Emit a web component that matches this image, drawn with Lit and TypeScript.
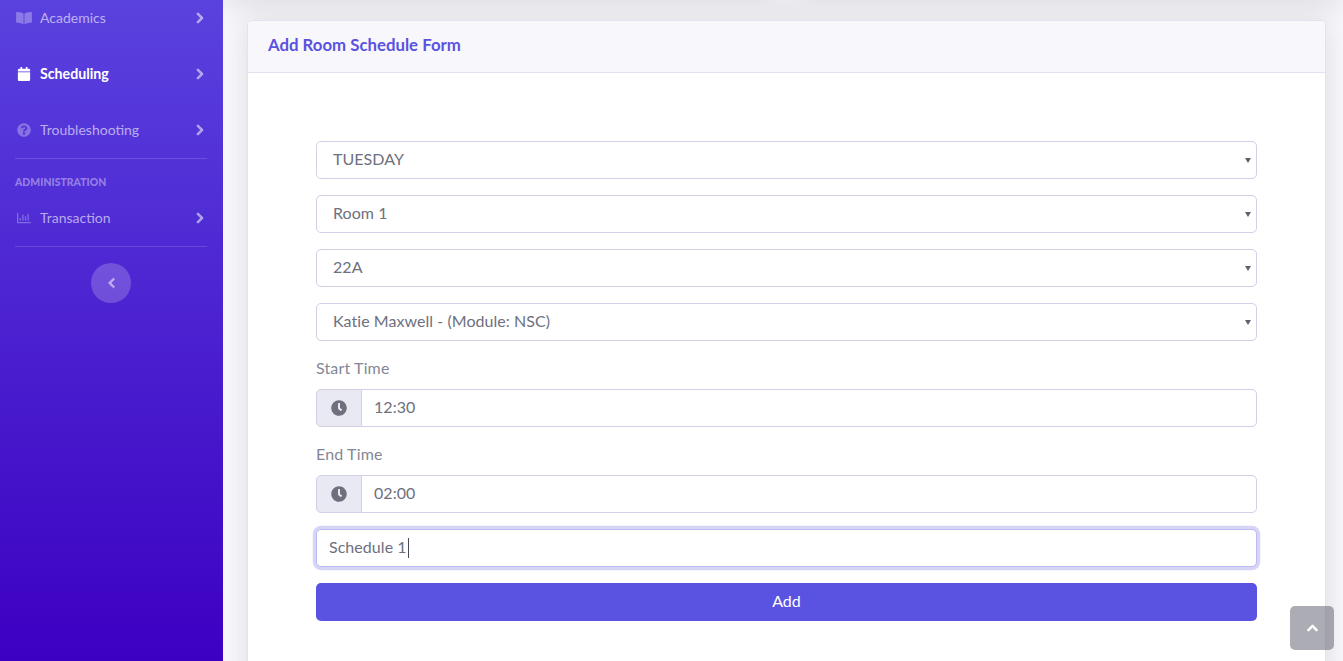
import { LitElement, html, css, svg } from "lit";
import { customElement } from "lit/decorators.js";

const P = {
  right: ["0 0 320 512", "M285.476 272.971L91.132 467.314c-9.373 9.373-24.569 9.373-33.941 0l-22.667-22.667c-9.357-9.357-9.375-24.522-.04-33.901L188.505 256 34.484 101.255c-9.335-9.379-9.317-24.544.04-33.901l22.667-22.667c9.373-9.373 24.569-9.373 33.941 0L285.475 239.03c9.373 9.372 9.373 24.568.001 33.941z"],
  left: ["0 0 320 512", "M34.52 239.03L228.87 44.69c9.37-9.37 24.57-9.37 33.94 0l22.67 22.67c9.36 9.36 9.37 24.52.04 33.9L131.49 256l154.02 154.75c9.34 9.38 9.32 24.54-.04 33.9l-22.67 22.67c-9.37 9.37-24.57 9.37-33.94 0L34.52 272.97c-9.37-9.37-9.37-24.57 0-33.94z"],
  up: ["0 0 448 512", "M240.971 130.524l194.343 194.343c9.373 9.373 9.373 24.569 0 33.941l-22.667 22.667c-9.357 9.357-24.522 9.375-33.901.04L224 227.495 69.255 381.516c-9.379 9.335-24.544 9.317-33.901-.04l-22.667-22.667c-9.373-9.373-9.373-24.569 0-33.941L207.03 130.525c9.372-9.373 24.568-9.373 33.941-.001z"],
  clock: ["0 0 512 512", "M256,8C119,8,8,119,8,256S119,504,256,504,504,393,504,256,393,8,256,8Zm92.49,313h0l-20,25a16,16,0,0,1-22.49,2.5h0l-67-49.72a40,40,0,0,1-15-31.23V112a16,16,0,0,1,16-16h32a16,16,0,0,1,16,16V256l58,42.5A16,16,0,0,1,348.49,321Z"],
  calendar: ["0 0 448 512", "M12 192h424c6.6 0 12 5.4 12 12v260c0 26.5-21.5 48-48 48H48c-26.5 0-48-21.5-48-48V204c0-6.6 5.4-12 12-12zm436-44v-36c0-26.5-21.5-48-48-48h-48V12c0-6.6-5.4-12-12-12h-40c-6.6 0-12 5.4-12 12v52H160V12c0-6.6-5.4-12-12-12h-40c-6.6 0-12 5.4-12 12v52H48C21.5 64 0 85.5 0 112v36c0 6.6 5.4 12 12 12h424c6.6 0 12-5.4 12-12z"],
  question: ["0 0 512 512", "M504 256c0 136.997-111.043 248-248 248S8 392.997 8 256C8 119.083 119.043 8 256 8s248 111.083 248 248zM262.655 90c-54.497 0-89.255 22.957-116.549 63.758-3.536 5.286-2.353 12.415 2.715 16.258l34.699 26.31c5.205 3.947 12.621 3.008 16.665-2.122 17.864-22.658 30.113-35.797 57.303-35.797 20.429 0 45.698 13.148 45.698 32.958 0 14.976-12.363 22.667-32.534 33.976C247.128 238.528 216 254.941 216 296v4c0 6.627 5.373 12 12 12h56c6.627 0 12-5.373 12-12v-1.333c0-28.462 83.186-29.647 83.186-106.667 0-58.002-60.165-102-116.531-102zM256 338c-25.365 0-46 20.635-46 46 0 25.364 20.635 46 46 46s46-20.636 46-46c0-25.365-20.635-46-46-46z"],
  book: ["0 0 576 512", "M542.22 32.05c-54.8 3.11-163.72 14.43-230.96 55.59-4.64 2.84-7.27 7.89-7.27 13.17v363.87c0 11.55 12.63 18.85 23.28 13.49 69.18-34.82 169.23-44.32 218.7-46.92 16.89-.89 30.02-14.43 30.02-30.66V62.75c.01-17.71-15.35-31.74-33.77-30.7zM264.73 87.64C197.5 46.48 88.58 35.17 33.78 32.05 15.36 31.01 0 45.04 0 62.75V400.6c0 16.24 13.13 29.78 30.02 30.66 49.49 2.6 149.59 12.11 218.77 46.95 10.62 5.35 23.21-1.94 23.21-13.46V100.63c0-5.29-2.62-10.14-7.27-12.99z"],
  chart: ["0 0 512 512", "M396.8 352h22.4c6.4 0 12.8-6.4 12.8-12.8V108.8c0-6.4-6.4-12.8-12.8-12.8h-22.4c-6.4 0-12.8 6.4-12.8 12.8v230.4c0 6.4 6.4 12.8 12.8 12.8zm-192 0h22.4c6.4 0 12.8-6.4 12.8-12.8V140.8c0-6.4-6.4-12.8-12.8-12.8h-22.4c-6.4 0-12.8 6.4-12.8 12.8v198.4c0 6.4 6.4 12.8 12.8 12.8zm96 0h22.4c6.4 0 12.8-6.4 12.8-12.8V204.8c0-6.4-6.4-12.8-12.8-12.8h-22.4c-6.4 0-12.8 6.4-12.8 12.8v134.4c0 6.4 6.4 12.8 12.8 12.8zM496 400H48V80c0-8.84-7.16-16-16-16H16C7.16 64 0 71.16 0 80v336c0 17.67 14.33 32 32 32h464c8.84 0 16-7.16 16-16v-16c0-8.84-7.16-16-16-16zm-387.2-48h22.4c6.4 0 12.8-6.4 12.8-12.8v-70.4c0-6.4-6.4-12.8-12.8-12.8h-22.4c-6.4 0-12.8 6.4-12.8 12.8v70.4c0 6.4 6.4 12.8 12.8 12.8z"],
} as const;

const icon = (n: keyof typeof P, cls = "") =>
  html`<svg class="ic ${cls}" viewBox=${P[n][0]} fill="currentColor" aria-hidden="true">${svg`<path d=${P[n][1]}></path>`}</svg>`;

@customElement("app-root")
export class AppRoot extends LitElement {
  static styles = css`
    :host {
      display: block;
      height: 100vh;
      overflow: hidden;
      position: relative;
      font-family: "Lato", "Open Sans", sans-serif;
      color: #6e707e;
    }
    * { box-sizing: border-box; }
    .ic { display: block; }
    .fat { stroke: currentColor; stroke-width: 36; }
    .layout { display: flex; height: 661px; overflow: hidden; }

    .sidebar {
      width: 223px;
      flex: none;
      overflow: hidden;
      background: linear-gradient(180deg, #5a42de 0%, #3c00c2 100%);
    }
    .nav { margin-top: -10px; display: flex; flex-direction: column; }
    .item {
      height: 56px;
      display: flex;
      align-items: center;
      padding: 0 19px 0 16px;
      color: rgba(255, 255, 255, 0.6);
      font-size: 14px;
    }
    .item .lead { width: 16px; height: 14px; color: rgba(255, 255, 255, 0.3); flex: none; }
    .item .label { margin-left: 8px; flex: 1; padding-bottom: 2px; }
    .item .chev { width: 8px; height: 12px; color: rgba(255, 255, 255, 0.5); flex: none; }
    .item.active { color: #fff; font-weight: 700; font-size: 14.2px; }
    .item.active .lead { color: #fff; }
    .divider { height: 1px; margin: 0 16px 0 15px; background: rgba(255, 255, 255, 0.15); }
    .heading {
      padding: 0 15px;
      margin-top: 17px;
      height: 14px;
      line-height: 12px;
      font-size: 10.4px;
      font-weight: 900;
      letter-spacing: 0.05px;
      color: rgba(255, 255, 255, 0.4);
      text-transform: uppercase;
    }
    .toggle-row { display: flex; justify-content: center; padding: 16px 1px 0 0; }
    .toggle {
      width: 40px;
      height: 40px;
      border-radius: 50%;
      border: 0;
      padding: 0;
      display: flex;
      align-items: center;
      justify-content: center;
      background: rgba(255, 255, 255, 0.2);
      color: rgba(255, 255, 255, 0.5);
    }
    .toggle .ic { width: 7px; height: 12px; }

    .content {
      flex: 1;
      min-width: 0;
      background: #f8f8fc;
      padding: 21px 17px 0 24px;
      position: relative;
      overflow: hidden;
    }
    .content::before {
      content: "";
      position: absolute;
      left: 0;
      right: 0;
      top: -30px;
      height: 30px;
      box-shadow: 0 4px 28px rgba(58, 59, 69, 0.15);
    }
    .content::after {
      content: "";
      position: absolute;
      left: 535px;
      top: -8px;
      width: 60px;
      height: 16px;
      background: radial-gradient(closest-side, rgba(248, 248, 252, 0.35), rgba(248, 248, 252, 0));
    }
    .card {
      position: relative;
      background: #fff;
      border: 1px solid #e3e2f3;
      border-radius: 5px;
      box-shadow: 0 2.4px 28px rgba(58, 59, 69, 0.15);
      height: 800px;
      margin-top: -1px;
    }
    .card-head {
      height: 52px;
      display: flex;
      align-items: center;
      padding: 0 20px 5px;
      background: #f8f8fc;
      border-bottom: 1px solid #e3e2f3;
      border-radius: 4px 4px 0 0;
      font-weight: 700;
      font-size: 16.8px;
      color: #5a52e0;
    }
    .form { padding: 68px 68px 0; display: flex; flex-direction: column; }
    .sel { position: relative; margin-bottom: 16px; }
    .sel svg { position: absolute; right: 6px; top: 17px; width: 6px; height: 5px; fill: #5f6070; }
    .ctl {
      display: block;
      width: 100%;
      height: 38px;
      border: 1px solid #d1d0e6;
      border-radius: 5px;
      background: #fff;
      color: #6e707e;
      font: 400 16px "Lato", "Open Sans", sans-serif;
      letter-spacing: 0.05px;
      padding: 4px 12px 8px;
    }
    select.ctl { appearance: none; padding-left: 16px; }
    .lab {
      font-size: 16px;
      line-height: 22px;
      letter-spacing: 0.15px;
      color: #858796;
      padding-bottom: 2px;
      margin-bottom: 8px;
    }
    .group { display: flex; height: 38px; margin-bottom: 16px; }
    .addon {
      width: 46px;
      flex: none;
      display: flex;
      align-items: center;
      justify-content: center;
      background: #e9e9f4;
      border: 1px solid #d1d0e6;
      border-radius: 5px 0 0 5px;
      color: #6e707e;
    }
    .addon .ic { width: 16px; height: 16px; }
    .group .ctl { margin-left: -1px; flex: 1; width: auto; min-width: 0; border-radius: 0 5px 5px 0; }
    .focus {
      display: flex;
      align-items: center;
      margin-bottom: 16px;
      border-color: #bdb9f2;
      box-shadow: 0 0 0 3.2px rgba(90, 82, 224, 0.25);
    }
    .caret { width: 1px; height: 20px; background: #4a4a55; margin: 3px 0 0 1px; }
    .btn {
      height: 38px;
      border: 0;
      border-radius: 5px;
      background: #5a52e0;
      color: #fff;
      padding: 0 0 4px;
      font: 400 16px "Lato", "Open Sans", sans-serif;
    }
    .top {
      position: absolute;
      right: 9px;
      bottom: 11px;
      width: 44px;
      height: 44px;
      border-radius: 5px;
      background: rgba(90, 92, 105, 0.5);
      color: #fff;
      display: flex;
      align-items: center;
      justify-content: center;
    }
    .top .ic { width: 11px; height: 12px; }
  `;

  private row(ic: keyof typeof P, label: string, active = false) {
    return html`<div class="item ${active ? "active" : ""}">
      ${icon(ic, "lead")}<span class="label">${label}</span>${icon("right", "chev fat")}
    </div>`;
  }

  private select(value: string) {
    return html`<div class="sel">
      <select class="ctl"><option>${value}</option></select>
      <svg viewBox="0 0 6 5" aria-hidden="true">${svg`<polygon points="0,0 6,0 3,5"></polygon>`}</svg>
    </div>`;
  }

  render() {
    return html`
      <div class="layout">
        <aside class="sidebar">
          <nav class="nav">
            ${this.row("book", "Academics")}
            ${this.row("calendar", "Scheduling", true)}
            ${this.row("question", "Troubleshooting")}
            <div class="divider"></div>
            <div class="heading">Administration</div>
            ${this.row("chart", "Transaction")}
            <div class="divider"></div>
            <div class="toggle-row"><button class="toggle">${icon("left", "fat")}</button></div>
          </nav>
        </aside>
        <main class="content">
          <section class="card">
            <header class="card-head">Add Room Schedule Form</header>
            <form class="form">
              ${this.select("TUESDAY")}
              ${this.select("Room 1")}
              ${this.select("22A")}
              ${this.select("Katie Maxwell - (Module: NSC)")}
              <label class="lab">Start Time</label>
              <div class="group">
                <span class="addon">${icon("clock")}</span>
                <input class="ctl" .value=${"12:30"} />
              </div>
              <label class="lab">End Time</label>
              <div class="group">
                <span class="addon">${icon("clock")}</span>
                <input class="ctl" .value=${"02:00"} />
              </div>
              <div class="ctl focus">Schedule 1<span class="caret"></span></div>
              <button class="btn" type="button">Add</button>
            </form>
          </section>
        </main>
      </div>
      <a class="top">${icon("up", "fat")}</a>
    `;
  }
}
